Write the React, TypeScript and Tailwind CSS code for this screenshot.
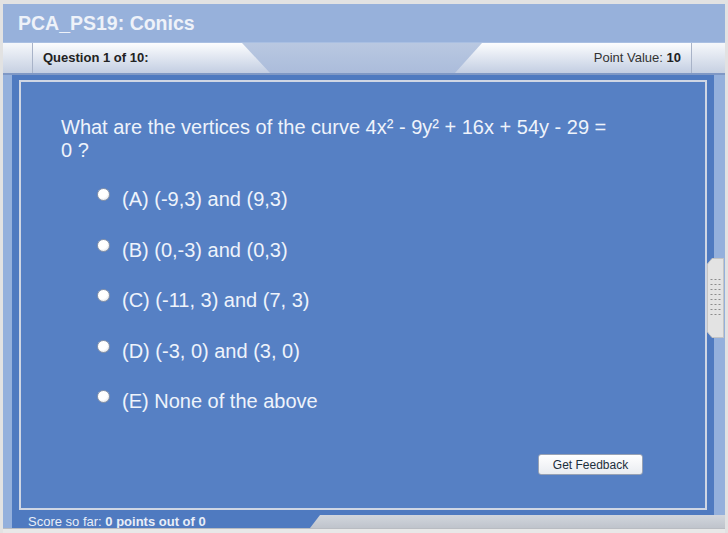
const options = [
  "(A) (-9,3) and (9,3)",
  "(B) (0,-3) and (0,3)",
  "(C) (-11, 3) and (7, 3)",
  "(D) (-3, 0) and (3, 0)",
  "(E) None of the above",
];

const Handle = () => {
  const rows = [0, 1, 2, 3, 4, 5, 6, 7];
  const cols = [0, 1, 2];
  return (
    <svg width="17" height="80" viewBox="0 0 17 80" className="absolute left-[707px] top-[258px]">
      <polygon points="5,0.5 16.5,0.5 16.5,79.5 5,79.5 0.5,74 0.5,6" fill="#e3e3e3" stroke="#c4c4c4" />
      {rows.map((r) =>
        cols.map((c) => (
          <rect key={`${r}-${c}`} x={3.5 + c * 4} y={21 + r * 5} width="2" height="1" fill="#8c8c8c" />
        ))
      )}
    </svg>
  );
};

const Radio = () => (
  <span className="mt-[0px] w-[13px] h-[13px] rounded-full border border-[#8d97a8] bg-[radial-gradient(circle_at_40%_35%,#ffffff_50%,#cfd4dc_100%)] shrink-0" />
);

export default function App() {
  return (
    <div className="relative w-[728px] h-[533px] bg-[#e2e2e2] pt-[4px] px-[3px] flex flex-col font-['Liberation_Sans',Arial,sans-serif]">
      {/* title */}
      <div className="h-[39px] bg-[#97b1db] border-b border-[#a9bfe2] flex items-center pl-[15px] pt-[1px]">
        <h1 className="text-[19.5px] font-bold text-[#eef2f9]">PCA_PS19: Conics</h1>
      </div>

      {/* tab bar */}
      <div className="h-[32px] flex bg-linear-to-b from-[#b9c8e1] to-[#abbcdb] border-b-2 border-[#7f98c5]">
        <div className="w-[30px] bg-linear-to-b from-[#f6f8fb] to-[#c6d0e2] border-r border-[#a8b3c8]" />
        <div className="w-[237px] bg-linear-to-b from-[#fcfdfe] to-[#c3cee2] [clip-path:polygon(0_0,209px_0,237px_100%,0_100%)] flex items-center pl-[10px]">
          <span className="text-[13px] font-bold text-[#222222]">Question 1 of 10:</span>
        </div>
        <div className="w-[185px]" />
        <div className="w-[237px] bg-linear-to-b from-[#fcfdfe] to-[#c3cee2] [clip-path:polygon(27px_0,100%_0,100%_100%,0_100%)] border-r border-[#a8b3c8] flex items-center justify-end pr-[10px]">
          <span className="text-[13px] text-[#333333]">
            Point Value: <b className="text-[#222222]">10</b>
          </span>
        </div>
        <div className="flex-1 bg-linear-to-b from-[#f6f8fb] to-[#c6d0e2]" />
      </div>

      {/* main */}
      <div className="h-[440px] flex">
        <div className="w-[9px] bg-[#94b0dc]" />
        <div className="flex-1 bg-[#4f7ac0] px-[7px] pt-[5px] pb-[5px]">
          <div className="h-full border-2 border-[#cfd6e4] bg-[#5680c4] flex flex-col">
            <p className="pl-[40px] pt-[34px] text-[20px] leading-[23px] text-[#eef3fb]">
              What are the vertices of the curve 4x² - 9y² + 16x + 54y - 29 =
              <br />0 ?
            </p>
            <div className="mt-[26px] pl-[76px] flex flex-col gap-[27.5px]">
              {options.map((o) => (
                <label key={o} className="flex items-start gap-[12px]">
                  <Radio />
                  <span className="text-[20px] leading-[23px] text-[#eef3fb]">{o}</span>
                </label>
              ))}
            </div>
            <div className="mt-[41px] flex justify-end pr-[62px]">
              <button className="w-[105px] h-[21px] rounded-[3px] border border-[#98a2b4] bg-linear-to-b from-[#ffffff] to-[#e9ecf1] text-[12px] text-[#1c2f3c]">
                Get Feedback
              </button>
            </div>
          </div>
        </div>
        <div className="w-[11px] bg-[#94b0dc]" />
      </div>

      {/* score row */}
      <div className="h-[13px] flex">
        <div className="w-[9px] bg-[#94b0dc]" />
        <div className="w-[298px] bg-[#4f7ac0] pl-[16px] text-[13px] leading-[13px] text-[#e8eef8] whitespace-nowrap">
          Score so far: <b>0 points out of 0</b>
        </div>
        <div className="flex-1 bg-[#4f7ac0]">
          <div className="h-full bg-linear-to-b from-[#d2d6dd] to-[#bfc4cc] [clip-path:polygon(10px_0,100%_0,100%_100%,0_100%)]" />
        </div>
      </div>

      <div className="flex-1 bg-[#e8e8e8] border-t border-[#b9bcc2]" />

      <Handle />
    </div>
  );
}
